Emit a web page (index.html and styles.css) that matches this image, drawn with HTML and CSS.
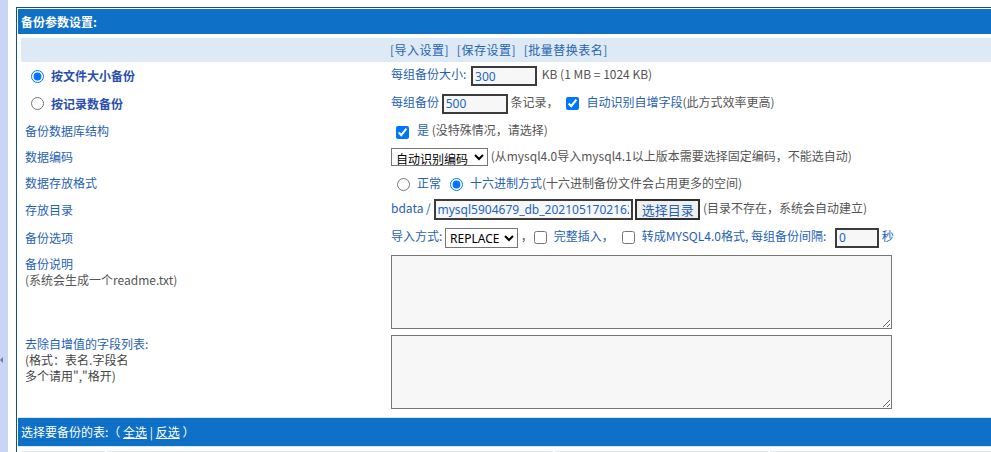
FILE: index.html
```html
<!DOCTYPE html>
<html lang="zh-CN">
<head>
<meta charset="utf-8">
<title>备份参数设置</title>
<link rel="stylesheet" href="styles.css">
</head>
<body>
<div class="page">
  <div class="strip"><span class="arrow"></span></div>
  <div class="main">
    <div class="head">备份参数设置:</div>

    <div class="row r-links">
      <div class="c1"></div>
      <div class="c2"><a class="lnk">[导入设置]</a> <a class="lnk">[保存设置]</a> <a class="lnk">[批量替换表名]</a></div>
    </div>

    <div class="row h28">
      <div class="c1"><input type="radio" name="bt" class="rad1" checked><label class="bl">按文件大小备份</label></div>
      <div class="c2"><span class="lb">每组备份大小:</span> <input type="text" class="txt w66 i-size" value="300"> <span class="gr">KB (1 MB = 1024 KB)</span></div>
    </div>

    <div class="row h27">
      <div class="c1"><input type="radio" name="bt" class="rad1"><label class="bl">按记录数备份</label></div>
      <div class="c2"><span class="lb">每组备份</span> <input type="text" class="txt w66" value="500"> <span class="gr">条记录，</span><input type="checkbox" class="chk c-auto" checked><span class="lb">自动识别自增字段</span><span class="gr">(此方式效率更高)</span></div>
    </div>

    <div class="row h27">
      <div class="c1"><span class="lb">备份数据库结构</span></div>
      <div class="c2"><input type="checkbox" class="chk c-yes" checked><span class="lb">是</span> <span class="gr">(没特殊情况，请选择)</span></div>
    </div>

    <div class="row h26">
      <div class="c1"><span class="lb">数据编码</span></div>
      <div class="c2"><select class="sel enc"><option>自动识别编码</option></select> <span class="gr">(从mysql4.0导入mysql4.1以上版本需要选择固定编码，不能选自动)</span></div>
    </div>

    <div class="row h26">
      <div class="c1"><span class="lb">数据存放格式</span></div>
      <div class="c2"><input type="radio" name="fm" class="rad2"><span class="lb">正常</span><input type="radio" name="fm" class="rad2 r-hex" checked><span class="lb">十六进制方式</span><span class="gr">(十六进制备份文件会占用更多的空间)</span></div>
    </div>

    <div class="row h27">
      <div class="c1"><span class="lb">存放目录</span></div>
      <div class="c2"><span class="lb">bdata /</span> <input type="text" class="txt wdir" value="mysql5904679_db_20210517021624"> <button class="btn" type="button">选择目录</button> <span class="gr">(目录不存在，系统会自动建立)</span></div>
    </div>

    <div class="row h29">
      <div class="c1"><span class="lb">备份选项</span></div>
      <div class="c2"><span class="lb">导入方式:</span> <select class="sel rep"><option>REPLACE</option></select> <span class="gr">，</span><input type="checkbox" class="chk c-full"><span class="lb">完整插入，</span><input type="checkbox" class="chk c-my"><span class="lb">转成MYSQL4.0格式, 每组备份间隔:</span> <input type="text" class="txt w44" value="0"> <span class="lb">秒</span></div>
    </div>

    <div class="row area h80">
      <div class="c1 multi"><span class="lb">备份说明</span><br><span class="gr">(系统会生成一个readme.txt)</span></div>
      <div class="c2"><textarea class="ta"></textarea></div>
    </div>

    <div class="row area h81">
      <div class="c1 multi"><span class="lb">去除自增值的字段列表:</span><br><span class="dk">(格式：表名.字段名<br>多个请用","格开)</span></div>
      <div class="c2"><textarea class="ta"></textarea></div>
    </div>

    <div class="head2">选择要备份的表:（ <a class="wl">全选</a> | <a class="wl">反选</a> ）</div>

    <div class="cells">
      <div class="cell cw1"></div>
      <div class="cell cw2"></div>
      <div class="cell cw3"></div>
      <div class="cell cw4"></div>
    </div>
  </div>
</div>
</body>
</html>
```

FILE: styles.css
```css
html, body {
  margin: 0;
  padding: 0;
  overflow: hidden;
  background: #ffffff;
}
body {
  font-family: "Noto Sans CJK SC", "Noto Sans", sans-serif;
  font-size: 12px;
  color: #555555;
}
.page {
  display: flex;
  min-height: 452px;
  position: relative;
}
.strip {
  width: 8px;
  flex: none;
  background: #c8d5f5;
  position: relative;
}
.arrow {
  position: absolute;
  left: 0;
  top: 357px;
  width: 0;
  height: 0;
  border-top: 3px solid transparent;
  border-bottom: 3px solid transparent;
  border-right: 3px solid #6f7c95;
}
.main {
  margin-left: 8px;
  margin-top: 7px;
  width: 1010px;
  flex: none;
  border-top: 1px solid #1b4f7c;
  border-left: 1px solid #1b4f7c;
  padding: 1px 0 0 1px;
}
.head {
  height: 25px;
  line-height: 25px;
  background: #0e70c6;
  color: #ffffff;
  font-weight: bold;
  padding-left: 3px;
}
.row {
  display: flex;
  align-items: center;
  margin-left: 3px;
  line-height: 16px;
  white-space: nowrap;
}
.r-links {
  margin-top: 4px;
  height: 24px;
  background: #dde9f5;
}
.h26 { height: 26px; }
.h27 { height: 27px; }
.h28 { height: 28px; }
.h29 { height: 29px; }
.h80 { height: 80px; }
.h81 { height: 81px; }
.c1 {
  width: 368px;
  flex: none;
  box-sizing: border-box;
  padding-left: 4px;
  display: flex;
  align-items: center;
}
.c1.multi {
  display: block;
}
.c2 {
  flex: 1;
  padding-left: 2px;
  white-space: nowrap;
}
.c2 input, .c2 select, .c2 button {
  vertical-align: middle;
}
.r-links .c2 { padding-left: 1px; }
.area {
  align-items: flex-start;
}
.area .c1 {
  padding-top: 4px;
}
.area .c2 {
  padding-top: 3px;
  padding-left: 2px;
  line-height: 0;
}
.lb { color: #1f62b5; }
.gr { color: #555555; }
.dk { color: #444444; }
.bl {
  color: #2a4fae;
  font-weight: bold;
}
.lnk {
  color: #2565b0;
  text-decoration: none;
  letter-spacing: 0.5px;
  margin-right: 5px;
}
.rad1 {
  margin: 0 7px 0 6px;
  width: 13px;
  height: 13px;
}
.rad2 {
  margin: 0 7px 0 6px;
  width: 13px;
  height: 13px;
}
.r-hex { margin-left: 9px; }
.chk {
  width: 13px;
  height: 13px;
  margin: 0 7px 0 0;
}
.c-auto { margin-left: 8px; }
.c-yes { margin-left: 5px; margin-right: 8px; }
.c-full { margin-left: 1px; }
.c-my { margin-left: 8px; }
.txt {
  box-sizing: border-box;
  height: 20px;
  border: 2px solid #3c3c3c;
  background: #f7f7f7;
  color: #1a66c2;
  -webkit-text-fill-color: #1a66c2;
  font-family: "Noto Sans", "Noto Sans CJK SC", sans-serif;
  font-size: 12px;
  padding: 0 2px;
  margin: 0;
}
.w66 { width: 66px; }
.i-size { margin-left: 2px; margin-right: 2px; }
.w44 { width: 44px; margin-left: 6px; }
.wdir {
  width: 199px;
  height: 21px;
}
.sel {
  box-sizing: border-box;
  margin: 0;
  font-family: "Noto Sans CJK SC", "Noto Sans", sans-serif;
  font-size: 12px;
  color: #000000;
  background: #ffffff;
  border: 1px solid #767676;
  border-radius: 0;
  padding: 0;
}
.enc {
  width: 97px;
  height: 18px;
}
.rep {
  width: 73px;
  height: 20px;
  font-family: "Noto Sans", sans-serif;
}
.btn {
  box-sizing: border-box;
  width: 65px;
  height: 21px;
  margin: 0;
  padding: 0;
  font-family: "Noto Sans CJK SC", sans-serif;
  font-size: 13px;
  line-height: 16px;
  color: #1f62b5;
  background: #efefef;
  border: 2px solid #2e2e2e;
  border-radius: 0;
}
.ta {
  box-sizing: border-box;
  width: 501px;
  height: 74px;
  margin: 0;
  border: 1px solid #767676;
  background: #f7f7f7;
  resize: both;
  vertical-align: top;
}
.head2 {
  margin-top: 4px;
  height: 28px;
  line-height: 28px;
  background: #0e70c6;
  color: #ffffff;
  padding-left: 3px;
  border-top: 1px solid #d9e7f3;
  border-bottom: 1px solid #d9e7f3;
}
.wl {
  color: #ffffff;
  text-decoration: underline;
}
.cells {
  display: flex;
  gap: 2px;
  margin: 4px 0 0 3px;
  height: 20px;
}
.cell {
  background: #e1eaf2;
  height: 20px;
}
.cw1 { width: 84px; }
.cw2 { width: 446px; }
.cw3 { width: 213px; }
.cw4 { flex: 1; }
```
